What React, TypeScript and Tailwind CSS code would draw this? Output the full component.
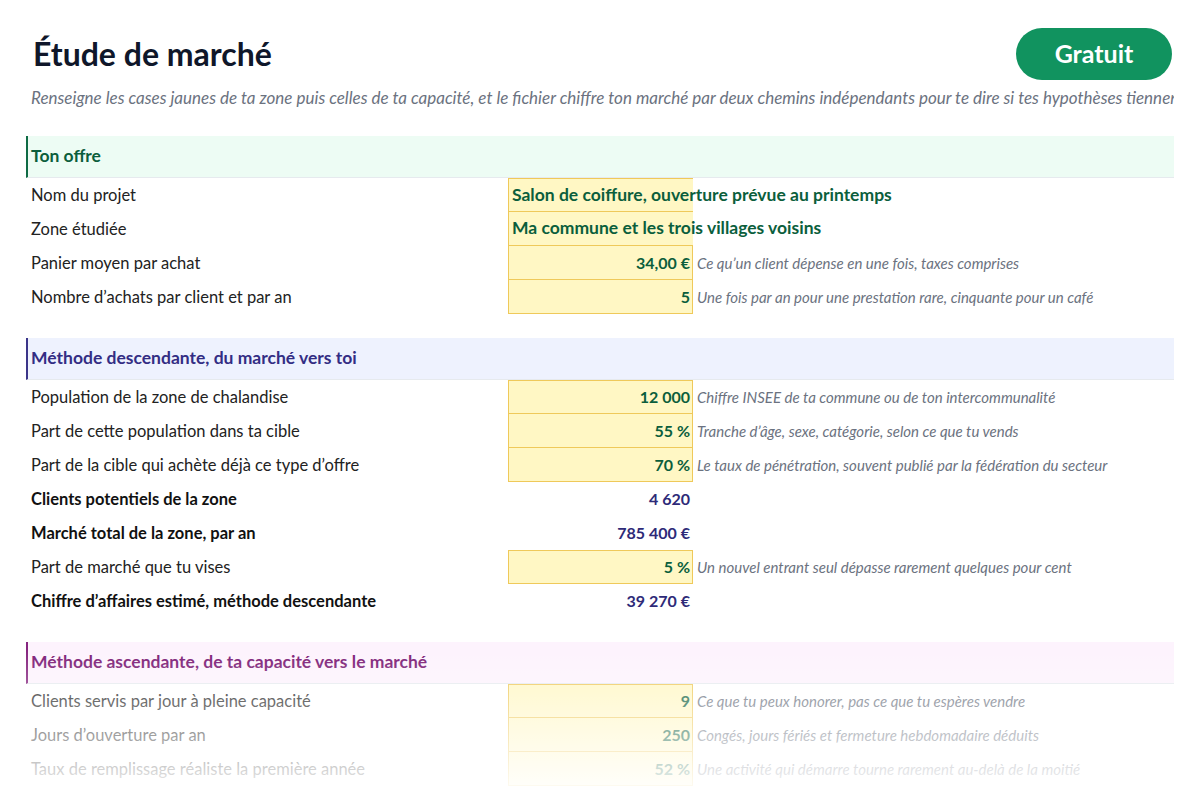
import type { ReactNode } from 'react';

type Row = {
  label: string;
  value?: string;
  note?: string;
  kind: 'input' | 'text' | 'total';
};

type Section = {
  title: string;
  tone: 'green' | 'indigo' | 'purple';
  rows: Row[];
};

const sections: Section[] = [
  {
    title: 'Ton offre',
    tone: 'green',
    rows: [
      { label: 'Nom du projet', value: 'Salon de coiffure, ouverture prévue au printemps', kind: 'text' },
      { label: 'Zone étudiée', value: 'Ma commune et les trois villages voisins', kind: 'text' },
      { label: 'Panier moyen par achat', value: '34,00 €', note: 'Ce qu’un client dépense en une fois, taxes comprises', kind: 'input' },
      { label: 'Nombre d’achats par client et par an', value: '5', note: 'Une fois par an pour une prestation rare, cinquante pour un café', kind: 'input' },
    ],
  },
  {
    title: 'Méthode descendante, du marché vers toi',
    tone: 'indigo',
    rows: [
      { label: 'Population de la zone de chalandise', value: '12 000', note: 'Chiffre INSEE de ta commune ou de ton intercommunalité', kind: 'input' },
      { label: 'Part de cette population dans ta cible', value: '55 %', note: 'Tranche d’âge, sexe, catégorie, selon ce que tu vends', kind: 'input' },
      { label: 'Part de la cible qui achète déjà ce type d’offre', value: '70 %', note: 'Le taux de pénétration, souvent publié par la fédération du secteur', kind: 'input' },
      { label: 'Clients potentiels de la zone', value: '4 620', kind: 'total' },
      { label: 'Marché total de la zone, par an', value: '785 400 €', kind: 'total' },
      { label: 'Part de marché que tu vises', value: '5 %', note: 'Un nouvel entrant seul dépasse rarement quelques pour cent', kind: 'input' },
      { label: 'Chiffre d’affaires estimé, méthode descendante', value: '39 270 €', kind: 'total' },
    ],
  },
  {
    title: 'Méthode ascendante, de ta capacité vers le marché',
    tone: 'purple',
    rows: [
      { label: 'Clients servis par jour à pleine capacité', value: '9', note: 'Ce que tu peux honorer, pas ce que tu espères vendre', kind: 'input' },
      { label: 'Jours d’ouverture par an', value: '250', note: 'Congés, jours fériés et fermeture hebdomadaire déduits', kind: 'input' },
      { label: 'Taux de remplissage réaliste la première année', value: '52 %', note: 'Une activité qui démarre tourne rarement au-delà de la moitié', kind: 'input' },
    ],
  },
];

const toneClass = {
  green: 'bg-[#edfcf4] border-l-[#0f6b45] text-[#0b5e3c]',
  indigo: 'bg-[#eef2fe] border-l-[#3b3589] text-[#332d84]',
  purple: 'bg-[#fdf3fd] border-l-[#86257f] text-[#7e1f78]',
};

function SectionHeader({ title, tone }: { title: string; tone: Section['tone'] }) {
  return (
    <div className={`flex h-[42px] items-center border-l-2 border-b border-b-[#e6eaee] pl-[3px] text-[17.5px] font-bold ${toneClass[tone]}`}>
      {title}
    </div>
  );
}

function Cell({ row, first }: { row: Row; first: boolean }) {
  if (row.kind === 'total') {
    return (
      <div className="flex h-full w-[185px] items-center justify-end pr-[3px] text-[16px] font-bold text-[#2e2a78]">
        {row.value}
      </div>
    );
  }
  const top = first ? 'border-t' : '';
  if (row.kind === 'text') {
    return (
      <div className={`flex h-full w-[185px] items-center whitespace-nowrap border-l border-b border-[#efc95a] bg-[#fff7c4] pl-[3px] text-[17.5px] font-bold text-[#0b5e3c] ${top}`}>
        {row.value}
      </div>
    );
  }
  return (
    <div className={`flex h-full w-[185px] items-center justify-end border-x border-b border-[#efc95a] bg-[#fff7c4] pr-[2px] text-[16px] font-bold text-[#0b5e3c] ${top}`}>
      {row.value}
    </div>
  );
}

function TableRow({ row, first }: { row: Row; first: boolean }) {
  return (
    <div className="flex h-[34px] items-center">
      <div className={`w-[482px] pl-[5px] ${row.kind === 'total' ? 'text-[16.5px] font-bold text-[#111111]' : 'text-[16.5px] text-[#222222]'}`}>
        {row.label}
      </div>
      <Cell row={row} first={first} />
      {row.note && <div className="whitespace-nowrap pl-[4px] text-[15px] italic text-[#6b7280]">{row.note}</div>}
    </div>
  );
}

function Block({ section, children }: { section: Section; children?: ReactNode }) {
  return (
    <div className="mt-6 first:mt-0">
      <SectionHeader title={section.title} tone={section.tone} />
      {section.rows.map((r, i) => {
        const prev = section.rows[i - 1];
        const first = !prev || prev.kind === 'total';
        return <TableRow key={r.label} row={r} first={first} />;
      })}
      {children}
    </div>
  );
}

export default function App() {
  return (
    <div className="relative h-[800px] w-[1200px] overflow-hidden bg-white font-['Lato','Noto_Sans',sans-serif]">
      <div className="mx-[26px] overflow-hidden">
        <div className="flex items-center justify-between pt-[28px] pr-[2px]">
          <h1 className="pl-[7px] text-[32px] font-bold leading-none text-[#0f172a]">Étude de marché</h1>
          <div className="flex h-[52px] w-[156px] items-center justify-center rounded-full bg-[#11935f] text-[25px] font-bold text-white">
            Gratuit
          </div>
        </div>
        <p className="mt-[8px] whitespace-nowrap pl-[5px] text-[17px] italic leading-5 text-[#6b7280]">
          Renseigne les cases jaunes de ta zone puis celles de ta capacité, et le fichier chiffre ton marché par deux chemins indépendants pour te dire si tes hypothèses tiennent la route.
        </p>
        <div className="mt-[28px]">
          {sections.map((s) => (
            <Block key={s.title} section={s} />
          ))}
        </div>
      </div>
      <div className="pointer-events-none absolute inset-x-0 bottom-0 h-[150px] bg-linear-to-b from-white/0 to-white" />
    </div>
  );
}
